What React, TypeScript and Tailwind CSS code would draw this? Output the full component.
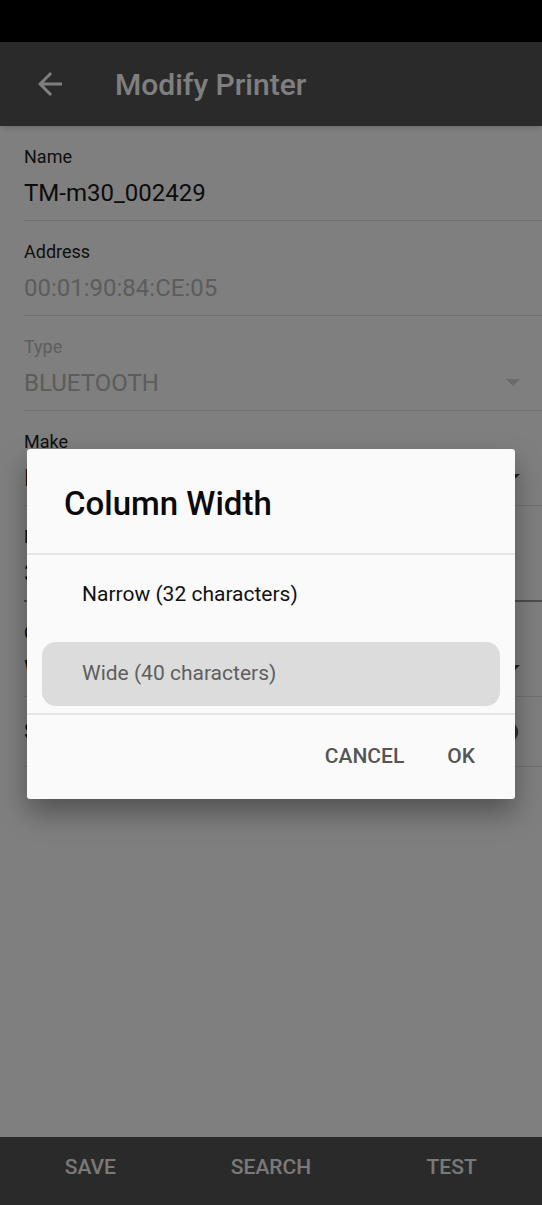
import React from 'react';

type Field = {
  label: string;
  value: string;
  disabled?: boolean;
  labelMuted?: boolean;
  dropdown?: boolean;
  focused?: boolean;
};

const FIELDS: Field[] = [
  { label: 'Name', value: 'TM-m30_002429' },
  { label: 'Address', value: '00:01:90:84:CE:05', disabled: true },
  { label: 'Type', value: 'BLUETOOTH', disabled: true, labelMuted: true, dropdown: true },
  { label: 'Make', value: 'EPSON', dropdown: true },
  { label: 'Line Feeds', value: '3', focused: true },
  { label: 'Column Width', value: 'Wide (40 characters)', dropdown: true },
];

const OPTIONS = [
  { label: 'Narrow (32 characters)', selected: false },
  { label: 'Wide (40 characters)', selected: true },
];

function Caret({ muted }: { muted?: boolean }) {
  return (
    <svg width="14" height="8" viewBox="0 0 14 8" className={muted ? 'fill-[#d4d4d4]' : 'fill-[#444444]'}>
      <path d="M0 0h14L7 7z" />
    </svg>
  );
}

function FormField({ field }: { field: Field }) {
  return (
    <div
      className={
        'pt-[21px] pb-[12px] ' +
        (field.focused ? 'border-b-2 border-[#9a9a9a]' : 'border-b border-[#e0e0e0]')
      }
    >
      <div className={'h-[20px] text-[18px] leading-[20px] ' + (field.labelMuted ? 'text-[#bdbdbd]' : 'text-[#202020]')}>
        {field.label}
      </div>
      <div className="mt-[11px] flex h-[30px] items-center justify-between pr-[22px]">
        <span className={'text-[24px] leading-[30px] ' + (field.disabled ? 'text-[#b8b8b8]' : 'text-[#181818]')}>
          {field.value}
        </span>
        {field.dropdown && <Caret muted={field.disabled} />}
      </div>
    </div>
  );
}

export default function App() {
  return (
    <div className="relative flex h-[1205px] w-[542px] flex-col overflow-hidden bg-white font-['Roboto',sans-serif]">
      {/* status bar */}
      <div className="h-[42px] bg-black" />

      {/* app bar */}
      <div className="flex h-[84px] items-center bg-[#545454] shadow-md">
        <svg viewBox="0 0 24 24" className="ml-[32px] h-[36px] w-[36px] fill-white">
          <path d="M20 11H7.83l5.59-5.59L12 4l-8 8 8 8 1.41-1.41L7.83 13H20v-2z" />
        </svg>
        <h1 className="ml-[47px] text-[30px] font-medium text-white">Modify Printer</h1>
      </div>

      {/* form */}
      <div className="flex-1 pl-6">
        {FIELDS.map((f) => (
          <FormField key={f.label} field={f} />
        ))}
        <div className="flex h-[70px] items-center justify-between border-b border-[#e0e0e0] pr-[24px]">
          <span className="text-[22px] text-[#202020]">Sound</span>
          <div className="relative flex h-[24px] w-[40px] items-center">
            <div className="h-[14px] w-full rounded-full bg-[#9a9a9a]" />
            <div className="absolute right-0 h-[22px] w-[22px] rounded-full bg-[#5a5a5a] shadow" />
          </div>
        </div>
      </div>

      {/* bottom bar */}
      <div className="grid h-[68px] grid-cols-3 bg-[#545454]">
        {['SAVE', 'SEARCH', 'TEST'].map((b) => (
          <button key={b} className="pb-[7px] text-[21px] font-medium text-[#f2f2f2]">
            {b}
          </button>
        ))}
      </div>

      {/* scrim + dialog */}
      <div className="absolute inset-0 flex justify-center bg-black/50 pt-[449px]">
        <div className="flex h-[350px] w-[488px] flex-col rounded-[3px] bg-[#fafafa] shadow-[0_14px_28px_rgba(0,0,0,0.35)]">
          <div className="flex h-[106px] items-center border-b-2 border-[#e6e6e6] pt-[6px] pl-[37px]">
            <h2 className="text-[33px] font-medium text-[#0a0a0a]">Column Width</h2>
          </div>

          <div className="flex flex-col gap-[15px] border-b-2 border-[#e6e6e6] px-[15px] pt-[8px] pb-[7px]">
            {OPTIONS.map((o) => (
              <div
                key={o.label}
                className={
                  'flex h-[64px] items-center rounded-[14px] pl-[40px] text-[21px] ' +
                  (o.selected ? 'bg-[#dcdcdc] text-[#5f5f5f]' : 'text-[#111111]')
                }
              >
                {o.label}
              </div>
            ))}
          </div>

          <div className="flex flex-1 items-center justify-end gap-[43px] pr-[40px]">
            <button className="text-[21px] font-medium text-[#555555]">CANCEL</button>
            <button className="text-[21px] font-medium text-[#555555]">OK</button>
          </div>
        </div>
      </div>
    </div>
  );
}
